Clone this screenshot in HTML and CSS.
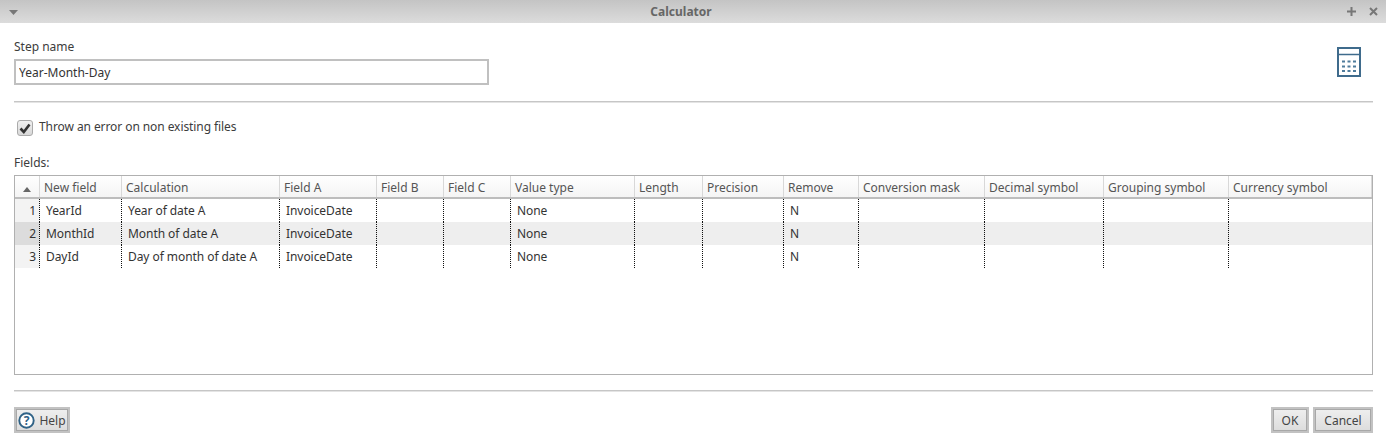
FILE: index.html
```html
<!DOCTYPE html>
<html lang="en">
<head>
    <meta charset="UTF-8">
    <title>Calculator</title>
    <link rel="stylesheet" href="styles.css">
</head>
<body>

    <div class="titlebar">
        <svg class="menu-arrow" width="9" height="5" viewBox="0 0 9 5"><path d="M0 0H9L4.5 5Z" fill="#777"/></svg>
        <span class="title">Calculator</span>
        <div class="win-buttons">
            <svg width="11" height="11" viewBox="0 0 11 11"><path d="M5.5 1V10M1 5.5H10" stroke="#777" stroke-width="2"/></svg>
            <svg width="11" height="11" viewBox="0 0 11 11"><path d="M2 2L9 9M9 2L2 9" stroke="#777" stroke-width="2"/></svg>
        </div>
    </div>

    <div class="dialog">
        <div class="step-row">
            <div class="step-name">
                <label class="step-label" for="stepName">Step name</label>
                <input class="step-input" type="text" id="stepName" value="Year-Month-Day">
            </div>
            <svg class="calc-icon" width="24" height="30" viewBox="0 0 24 30">
                <rect x="1" y="1" width="22" height="28" fill="#fff" stroke="#3f6b8c" stroke-width="2"/>
                <path d="M1 7.5H23" stroke="#3f6b8c" stroke-width="1.5"/>
                <path d="M5 14.5H8M10.5 14.5H13.5M16 14.5H19M5 19.5H8M10.5 19.5H13.5M16 19.5H19M5 24H8M10.5 24H13.5M16 24H19" stroke="#4f7c9c" stroke-width="2"/>
            </svg>
        </div>

        <hr class="divider">

        <div class="check-row">
            <span class="checkbox">
                <svg width="12" height="11" viewBox="0 0 12 11"><path d="M1.5 5.5L4.8 9L10.5 1.5" fill="none" stroke="#333" stroke-width="2.6"/></svg>
            </span>
            <span class="check-text">Throw an error on non existing files</span>
        </div>

        <div class="fields-label">Fields:</div>

        <div class="grid">
            <div class="grid-row grid-head">
                <div class="cell"><svg width="8" height="5" viewBox="0 0 8 5"><path d="M0 5H8L4 0Z" fill="#666"/></svg></div>
                <div class="cell">New field</div>
                <div class="cell">Calculation</div>
                <div class="cell">Field A</div>
                <div class="cell">Field B</div>
                <div class="cell">Field C</div>
                <div class="cell">Value type</div>
                <div class="cell">Length</div>
                <div class="cell">Precision</div>
                <div class="cell">Remove</div>
                <div class="cell">Conversion mask</div>
                <div class="cell">Decimal symbol</div>
                <div class="cell">Grouping symbol</div>
                <div class="cell">Currency symbol</div>
            </div>
            <div class="grid-row">
                <div class="cell num">1</div>
                <div class="cell">YearId</div>
                <div class="cell">Year of date A</div>
                <div class="cell">InvoiceDate</div>
                <div class="cell"></div>
                <div class="cell"></div>
                <div class="cell">None</div>
                <div class="cell"></div>
                <div class="cell"></div>
                <div class="cell">N</div>
                <div class="cell"></div>
                <div class="cell"></div>
                <div class="cell"></div>
                <div class="cell"></div>
            </div>
            <div class="grid-row alt">
                <div class="cell num">2</div>
                <div class="cell">MonthId</div>
                <div class="cell">Month of date A</div>
                <div class="cell">InvoiceDate</div>
                <div class="cell"></div>
                <div class="cell"></div>
                <div class="cell">None</div>
                <div class="cell"></div>
                <div class="cell"></div>
                <div class="cell">N</div>
                <div class="cell"></div>
                <div class="cell"></div>
                <div class="cell"></div>
                <div class="cell"></div>
            </div>
            <div class="grid-row">
                <div class="cell num">3</div>
                <div class="cell">DayId</div>
                <div class="cell">Day of month of date A</div>
                <div class="cell">InvoiceDate</div>
                <div class="cell"></div>
                <div class="cell"></div>
                <div class="cell">None</div>
                <div class="cell"></div>
                <div class="cell"></div>
                <div class="cell">N</div>
                <div class="cell"></div>
                <div class="cell"></div>
                <div class="cell"></div>
                <div class="cell"></div>
            </div>
        </div>

        <hr class="divider bottom">

        <div class="buttons">
            <button class="btn help" type="button">
                <svg width="17" height="17" viewBox="0 0 17 17">
                    <circle cx="8.5" cy="8.5" r="7.2" fill="#fff" stroke="#2f6286" stroke-width="1.9"/>
                    <text x="8.5" y="12.5" text-anchor="middle" class="help-mark">?</text>
                </svg>
                Help
            </button>
            <div class="right-buttons">
                <button class="btn ok" type="button">OK</button>
                <button class="btn cancel" type="button">Cancel</button>
            </div>
        </div>
    </div>

</body>
</html>
```

FILE: styles.css
```css
body {
    margin: 0;
    background-color: #fff;
    font-family: "Noto Sans", sans-serif;
    font-size: 12px;
    color: #3c3c3c;
    height: 446px;
    overflow: hidden;
}

.titlebar {
    height: 23px;
    display: flex;
    align-items: center;
    justify-content: space-between;
    padding: 0 7px 0 9px;
    background: linear-gradient(#c4c4c4, #dcdcdc);
    position: relative;
}

.menu-arrow {
    margin-top: 1px;
}

.title {
    position: absolute;
    left: 0;
    right: 24px;
    text-align: center;
    font-weight: bold;
    color: #666;
}

.win-buttons {
    display: flex;
    gap: 11px;
}

.dialog {
    padding: 0 13px 0 14px;
}

.step-row {
    display: flex;
    justify-content: space-between;
    align-items: flex-start;
}

.step-name {
    padding-top: 15px;
}

.step-label {
    display: block;
    line-height: 17px;
    margin-bottom: 4px;
}

.step-input {
    display: block;
    width: 475px;
    height: 26px;
    box-sizing: border-box;
    margin: 0;
    padding: 0 3px;
    border: 2px solid #c0c0c0;
    font: inherit;
    color: #333;
    outline: none;
}

.calc-icon {
    margin: 24px 12px 0 0;
}

.divider {
    border: none;
    border-bottom: 1px solid #e4e4e4;
    height: 1px;
    margin: 16px 0 0;
    background-color: #c6c6c6;
}

.check-row {
    display: flex;
    align-items: center;
    gap: 6px;
    margin: 15px 0 0 3px;
    height: 17px;
}

.check-text {
    letter-spacing: -0.08px;
}

.checkbox {
    width: 16px;
    height: 16px;
    margin-top: 3px;
    box-sizing: border-box;
    border: 1px solid #aaa;
    border-radius: 3px;
    background: linear-gradient(#f0f0f0, #d8d8d8);
    display: flex;
    align-items: center;
    justify-content: center;
}

.fields-label {
    margin-top: 19px;
    line-height: 17px;
}

.grid {
    margin-top: 4px;
    height: 200px;
    box-sizing: border-box;
    border: 1px solid #b0b0b0;
}

.grid-row {
    display: grid;
    grid-template-columns: 25px 82px 158px 97px 67px 67px 124px 68px 81px 75px 126px 119px 125px 1fr;
    height: 23px;
}

.grid-head {
    height: 23px;
    box-sizing: border-box;
    border-bottom: 2px solid #bdbdbd;
    background: linear-gradient(#fff, #f4f4f4);
}

.alt {
    background-color: #eeeeee;
}

.cell {
    padding-left: 6px;
    line-height: 23px;
    white-space: nowrap;
    overflow: hidden;
    border-right: 1px dotted #111;
    color: #333;
    letter-spacing: -0.06px;
}

.cell:last-child {
    border-right: none;
}

.grid-head .cell {
    padding-left: 4px;
    line-height: 24px;
    border-right: 1px solid #d8d8d8;
    color: #555;
    letter-spacing: 0;
}

.grid-head .cell:first-child {
    padding-left: 8px;
}

.num {
    padding: 0 3px 0 0;
    text-align: right;
    background-color: #f3f3f3;
}

.alt .num {
    background-color: #dcdcdc;
}

.bottom {
    margin-top: 15px;
}

.buttons {
    display: flex;
    justify-content: space-between;
    margin-top: 15px;
}

.right-buttons {
    display: flex;
    gap: 4px;
}

.btn {
    height: 26px;
    box-sizing: border-box;
    margin: 0;
    padding: 0;
    border: 2px solid #c2c2c2;
    background: linear-gradient(#efefef, #dcdcdc);
    box-shadow: inset 0 0 0 1px #a8a8a8;
    font: inherit;
    color: #444;
}

.help {
    width: 56px;
    display: flex;
    align-items: center;
    justify-content: center;
    gap: 4px;
}

.help-mark {
    font-size: 12px;
    font-weight: bold;
    fill: #2f6286;
}

.ok {
    width: 38px;
}

.cancel {
    width: 60px;
}
```
